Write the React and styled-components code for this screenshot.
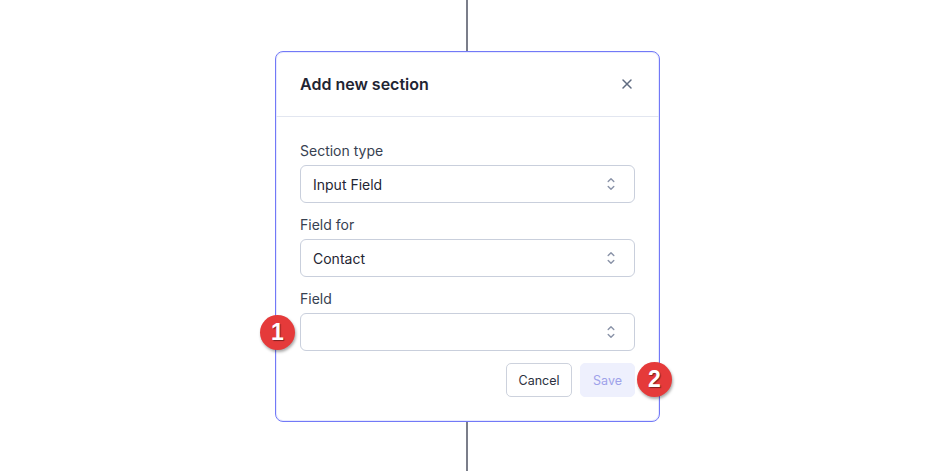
import React from "react";
import styled, { createGlobalStyle } from "styled-components";

const Global = createGlobalStyle`
  html, body { margin: 0; padding: 0; background: #ffffff; }
  body { font-family: Inter, "Noto Sans", sans-serif; -webkit-font-smoothing: antialiased; }
  * { box-sizing: border-box; }
`;

const Page = styled.div`
  width: 932px;
  height: 471px;
  display: flex;
  flex-direction: column;
  align-items: center;
  padding-left: 2px;
  overflow: hidden;
`;

const Connector = styled.div`
  width: 2px;
  background: #7b7e8a;
  height: ${(p) => (p.$grow ? "auto" : `${p.$h}px`)};
  flex: ${(p) => (p.$grow ? "1" : "none")};
`;

const Modal = styled.div`
  position: relative;
  width: 385px;
  margin-left: 1px;
  border: 1px solid #7279f7;
  box-shadow: inset 0 0 0 1px rgba(129, 140, 248, 0.18);
  border-radius: 8px;
  background: #fff;
  display: flex;
  flex-direction: column;
`;

const Header = styled.div`
  height: 65px;
  display: flex;
  align-items: center;
  justify-content: space-between;
  padding: 0 24px;
  border-bottom: 1px solid #e2e6f0;
`;

const Title = styled.h2`
  margin: 0;
  font-size: 16px;
  font-weight: 600;
  color: #1f2533;
  line-height: 24px;
`;

const CloseButton = styled.button`
  border: 0;
  background: none;
  padding: 0;
  width: 20px;
  height: 20px;
  display: flex;
  align-items: center;
  justify-content: center;
  color: #5f6b80;
  margin-right: -2px;
`;

const Body = styled.div`
  padding: 24px 24px 24px;
  display: flex;
  flex-direction: column;
`;

const FieldGroup = styled.div`
  display: flex;
  flex-direction: column;
  gap: 4px;
  margin-bottom: 12px;
`;

const Label = styled.label`
  font-size: 14px;
  line-height: 20px;
  color: #374151;
`;

const Select = styled.div`
  height: 38px;
  border: 1px solid #c9cfdc;
  border-radius: 6px;
  display: flex;
  align-items: center;
  justify-content: space-between;
  padding: 0 15px 0 12px;
  font-size: 14px;
  color: #1f2533;
`;

const Actions = styled.div`
  display: flex;
  justify-content: flex-end;
  gap: 8px;
`;

const Button = styled.button`
  height: 34px;
  padding: 0 ${(p) => (p.$primary ? "12px" : "11.5px")};
  border-radius: 5px;
  font-family: inherit;
  font-size: 12.5px;
  border: 1px solid ${(p) => (p.$primary ? "#eef0fd" : "#cdd2dd")};
  background: ${(p) => (p.$primary ? "#eef0fd" : "#fff")};
  color: ${(p) => (p.$primary ? "#9ea2ea" : "#2b3140")};
`;

const Badge = styled.div`
  position: absolute;
  left: ${(p) => p.$x}px;
  top: ${(p) => p.$y}px;
  width: 35px;
  height: 35px;
  border-radius: 50%;
  background: #e53a3a;
  box-shadow: 1px 2px 3px rgba(0, 0, 0, 0.35);
  color: #fff;
  font-family: "Liberation Sans", Arial, sans-serif;
  font-weight: 700;
  font-size: 23px;
  display: flex;
  align-items: center;
  justify-content: center;
  text-shadow: 1px 1px 1px rgba(0, 0, 0, 0.45);
`;

const UpDown = () => (
  <svg width="16" height="16" viewBox="0 0 16 16" fill="none" stroke="#8a93a8" strokeWidth="1.4" strokeLinecap="round" strokeLinejoin="round">
    <path d="M5.2 5.6 8 2.8l2.8 2.8" />
    <path d="M5.2 10.4 8 13.2l2.8-2.8" />
  </svg>
);

const XIcon = () => (
  <svg width="12" height="12" viewBox="0 0 12 12" fill="none" stroke="currentColor" strokeWidth="1.5" strokeLinecap="round">
    <path d="M2 2l8 8M10 2l-8 8" />
  </svg>
);

const fields = [
  { label: "Section type", value: "Input Field" },
  { label: "Field for", value: "Contact" },
  { label: "Field", value: "" },
];

export default function App() {
  return (
    <>
      <Global />
      <Page>
        <Connector $h={51} />
        <Modal>
          <Header>
            <Title>Add new section</Title>
            <CloseButton aria-label="Close">
              <XIcon />
            </CloseButton>
          </Header>
          <Body>
            {fields.map((f) => (
              <FieldGroup key={f.label}>
                <Label>{f.label}</Label>
                <Select>
                  <span>{f.value}</span>
                  <UpDown />
                </Select>
              </FieldGroup>
            ))}
            <Actions>
              <Button>Cancel</Button>
              <Button $primary>Save</Button>
            </Actions>
          </Body>
          <Badge $x={-16} $y={263}>1</Badge>
          <Badge $x={361} $y={310}>2</Badge>
        </Modal>
        <Connector $grow />
      </Page>
    </>
  );
}
